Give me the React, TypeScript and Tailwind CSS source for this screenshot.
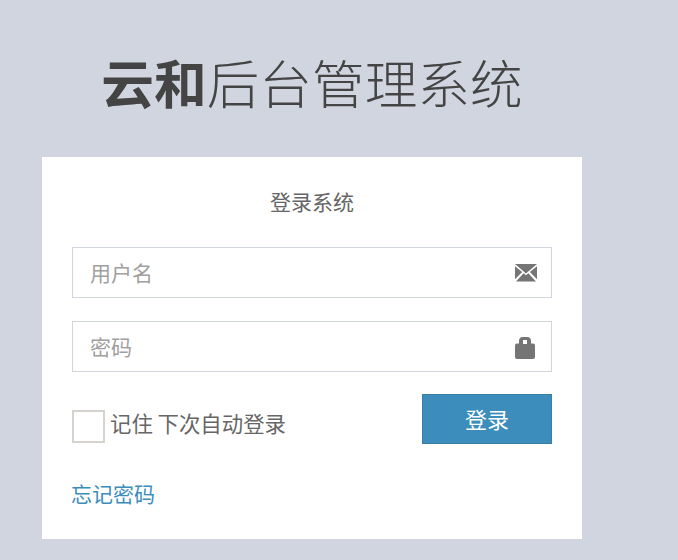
export default function App() {
  return (
    <div className="h-[560px] w-[678px] overflow-hidden bg-[#d1d5df] pl-[42px] font-['Noto_Sans_CJK_SC','Noto_Sans',sans-serif]">
      <div className="w-[540px]">
        <h1 className="flex h-[157px] items-start justify-center pt-[45px] text-[52.700px] leading-[72px] font-light text-[#444444]">
          <span className="font-bold">云和</span>
          <span>后台管理系统</span>
        </h1>
        <div className="flex h-[382px] flex-col bg-white px-[30px]">
          <h2 className="mt-[30px] text-center text-[21px] leading-[28px] font-normal text-[#666666]">登录系统</h2>
          <div className="mt-[32px] flex h-[51px] items-center justify-between border border-[#d1d5df] pr-[14px] pl-[17px]">
            <span className="text-[21px] text-[#a0a0a0]">用户名</span>
            <svg width="22" height="18" viewBox="0 0 22 18" className="mt-px">
              <path fill="#757575" d="M0 0h22L11 9.500z" />
              <path fill="#757575" d="M0 2.200 7.200 8 0 15.200zM22 2.200 14.800 8 22 15.200zM8.600 9.200 11 11.200l2.400-2L21 17.500H1z" />
            </svg>
          </div>
          <div className="mt-[23px] flex h-[51px] items-center justify-between border border-[#d1d5df] pr-[16px] pl-[17px]">
            <span className="text-[21px] text-[#a0a0a0]">密码</span>
            <svg width="20" height="22" viewBox="0 0 20 22" className="mt-[2px]">
              <path fill="#757575" fillRule="evenodd" d="M4 6.500V4a4 4 0 0 1 4-4h4a4 4 0 0 1 4 4v2.500h2a2 2 0 0 1 2 2V20a2 2 0 0 1-2 2H2a2 2 0 0 1-2-2V8.500a2 2 0 0 1 2-2zM8 7h4V3H8z" />
            </svg>
          </div>
          <div className="mt-[22px] flex items-start justify-between">
            <label className="mt-[16px] flex items-center gap-[5px]">
              <span className="block h-[33px] w-[33px] border-2 border-[#d6d3ce] bg-white" />
              <span className="-mt-[7px] text-[21.400px] leading-[30px] text-[#666666]">记住 下次自动登录</span>
            </label>
            <button className="h-[50px] w-[130px] border border-[#3a7ea8] bg-[#3c8dbc] pb-[2px] text-[22px] text-white">登录</button>
          </div>
          <a className="mt-[34px] -ml-px text-[21px] leading-[30px] text-[#3c8dbc]">忘记密码</a>
        </div>
      </div>
    </div>
  );
}
